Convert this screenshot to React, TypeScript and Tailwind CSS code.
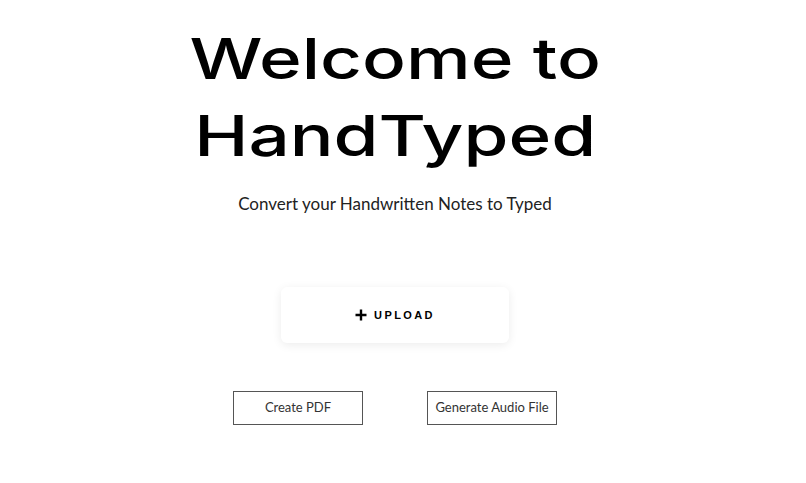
import React from 'react';

const App: React.FC = () => {
  return (
    <div className="min-h-screen w-full bg-white">
      <div className="w-[790px] flex flex-col items-center">
        <h1
          className="mt-[21px] text-center text-black text-[56px] leading-[77px] font-medium scale-x-[1.3]"
          style={{ fontFamily: 'Inter, "Noto Sans", sans-serif' }}
        >
          Welcome to
          <br />
          HandTyped
        </h1>
        <p
          className="mt-[19px] text-[17px] text-[#222] leading-[20px]"
          style={{ fontFamily: 'Lato, "Noto Sans", sans-serif' }}
        >
          Convert your Handwritten Notes to Typed
        </p>

        <button className="mt-[73px] w-[228px] h-[56px] rounded-md bg-white shadow-[0_2px_10px_rgba(0,0,0,0.08)] flex items-center justify-center gap-[7px]">
          <svg width="12" height="12" viewBox="0 0 12 12" className="text-black">
            <path d="M6 0.5v11M0.5 6h11" stroke="currentColor" strokeWidth="2.4" />
          </svg>
          <span
            className="text-[11px] font-bold tracking-[0.22em] text-black"
            style={{ fontFamily: '"Liberation Sans", Arial, sans-serif' }}
          >
            UPLOAD
          </span>
        </button>

        <div
          className="mt-[48px] flex gap-[64px]"
          style={{ fontFamily: 'Lato, "Noto Sans", sans-serif' }}
        >
          <button className="w-[130px] h-[34px] border border-[#555] bg-white text-[13px] text-[#333]">
            Create PDF
          </button>
          <button className="w-[130px] h-[34px] border border-[#555] bg-white text-[13px] text-[#333]">
            Generate Audio File
          </button>
        </div>
      </div>
    </div>
  );
};

export default App;
